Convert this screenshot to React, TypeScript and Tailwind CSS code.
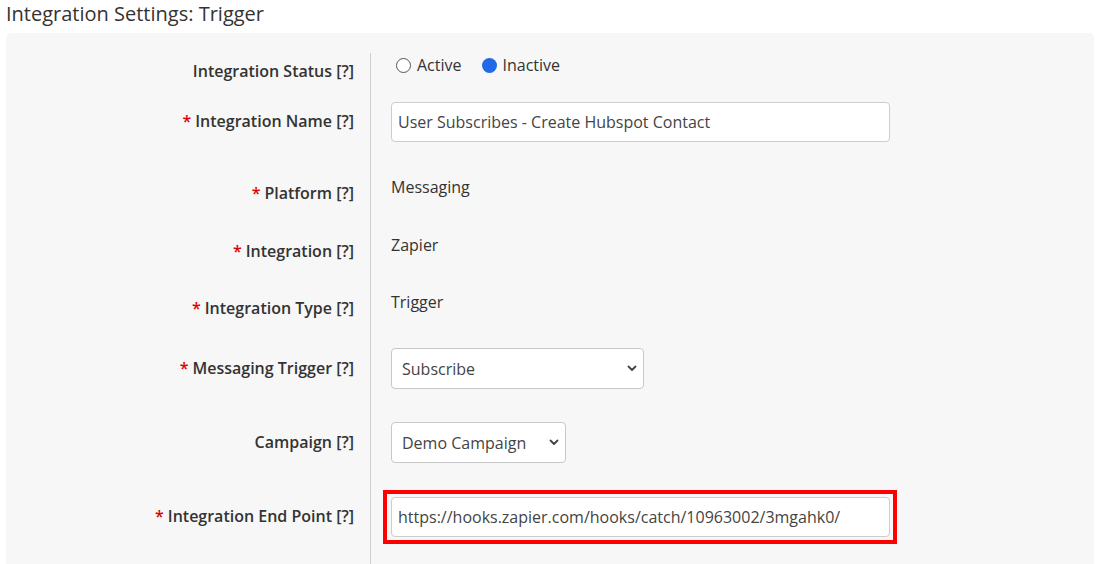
import type { ReactNode } from "react";

function Chevron() {
  return (
    <svg width="10" height="7" viewBox="0 0 10 7" className="shrink-0">
      <path d="M1.5 1.5 L5 5 L8.5 1.5" fill="none" stroke="#444" strokeWidth="1.8" strokeLinecap="round" strokeLinejoin="round" />
    </svg>
  );
}

function Row({ label, required, top, height, children }: { label: string; required?: boolean; top: string; height: string; children?: ReactNode }) {
  return (
    <div className="grid grid-cols-[364px_1fr]">
      <div className={`flex items-end justify-end pr-4 ${top}`}>
        <div className={`flex items-center justify-end pb-[2px] ${height}`}>
          <span className="text-[16px] font-semibold text-[#333]">
            {required && <span className="mr-1 text-[#e00000]">*</span>}
            {label}
          </span>
        </div>
      </div>
      <div className={`border-l border-[#cfcfcf] pl-5 ${top}`}>
        <div className={height}>{children}</div>
      </div>
    </div>
  );
}

function Text({ value }: { value: string }) {
  return <div className="pt-px text-[16px] leading-6 text-[#333]">{value}</div>;
}

function Select({ value, width }: { value: string; width: string }) {
  return (
    <div className={`flex h-[41px] items-center justify-between rounded-[4px] border border-[#c8c8c8] bg-white pl-[10px] pr-[6px] text-[16px] text-[#444] ${width}`}>
      <span>{value}</span>
      <Chevron />
    </div>
  );
}

export default function App() {
  return (
    <div className="h-[564px] overflow-hidden bg-white font-['Open_Sans',sans-serif]">
      <h1 className="pl-[6px] pt-px text-[20px] leading-[25px] text-[#333]">Integration Settings: Trigger</h1>
      <div className="ml-[6px] mr-px mt-[7px] rounded-t-[5px] bg-[#f7f7f7] pt-5">
        <Row label="Integration Status [?]" top="pt-0" height="h-[38px]">
          <div className="flex h-6 items-center text-[16px] text-[#333]">
            <span className="ml-[5px] h-[15px] w-[15px] rounded-full border-[1.5px] border-[#555] bg-white" />
            <span className="ml-[6px]">Active</span>
            <span className="ml-[20px] h-[15px] w-[15px] rounded-full bg-[#2269e6]" />
            <span className="ml-[6px]">Inactive</span>
          </div>
        </Row>
        <Row label="Integration Name [?]" required top="pt-[11px]" height="h-[40px]">
          <div className="flex h-[40px] w-[499px] items-center rounded-[4px] border border-[#cdcdcd] bg-white px-[6px] text-[16px] text-[#444]">
            User Subscribes - Create Hubspot Contact
          </div>
        </Row>
        <Row label="Platform [?]" required top="pt-[32px]" height="h-[40px]">
          <Text value="Messaging" />
        </Row>
        <Row label="Integration [?]" required top="pt-[18px]" height="h-[40px]">
          <Text value="Zapier" />
        </Row>
        <Row label="Integration Type [?]" required top="pt-[17px]" height="h-[40px]">
          <Text value="Trigger" />
        </Row>
        <Row label="Messaging Trigger [?]" required top="pt-[19px]" height="h-[41px]">
          <Select value="Subscribe" width="w-[253px]" />
        </Row>
        <Row label="Campaign [?]" top="pt-[33px]" height="h-[41px]">
          <Select value="Demo Campaign" width="w-[175px]" />
        </Row>
        <Row label="Integration End Point [?]" required top="pt-[27px]" height="h-[54px]">
          <div className="-ml-2 w-[514px] border-4 border-[#ff0000] py-[3px] pl-1 pr-[3px]">
            <div className="flex h-[40px] items-center rounded-[4px] border border-[#cdcdcd] bg-white px-[6px] text-[16px] text-[#444]">
              https://hooks.zapier.com/hooks/catch/10963002/3mgahk0/
            </div>
          </div>
        </Row>
        <div className="grid h-[40px] grid-cols-[364px_1fr]">
          <div />
          <div className="border-l border-[#cfcfcf]" />
        </div>
      </div>
    </div>
  );
}
